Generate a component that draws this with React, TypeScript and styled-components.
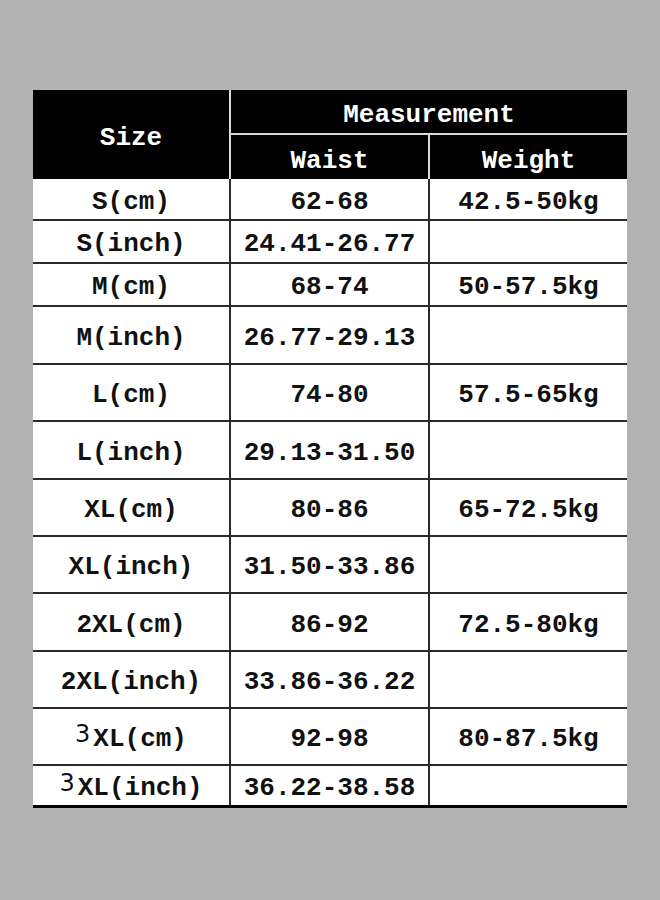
import React from 'react';
import styled, { createGlobalStyle } from 'styled-components';

const GlobalStyle = createGlobalStyle`
	html, body {
		margin: 0;
		padding: 0;
		background: #b2b2b2;
	}
`;

const Page = styled.div`
	width: 660px;
	height: 900px;
	padding: 90px 0 0 33px;
	box-sizing: border-box;
	background: #b2b2b2;
`;

const Grid = styled.div<{ $rows: string }>`
	display: grid;
	grid-template-columns: 198px 199px 197px;
	grid-template-rows: ${(p) => p.$rows};
	font-family: 'Liberation Mono', 'DejaVu Sans Mono', monospace;
	font-size: 26px;
	border-bottom: 3px solid #000;
	width: 594px;
`;

const HeadCell = styled.div<{ $span?: string; $right?: boolean; $bottom?: boolean }>`
	${(p) => p.$span || ''}
	display: flex;
	align-items: center;
	justify-content: center;
	background: #000;
	color: #fff;
	font-weight: bold;
	box-sizing: border-box;
	border-right: ${(p) => (p.$right ? '2px solid #d8d8d8' : 'none')};
	border-bottom: ${(p) => (p.$bottom ? '2px solid #d8d8d8' : 'none')};
	padding-top: 7px;
`;

const Cell = styled.div<{ $right?: boolean; $last?: boolean }>`
	display: flex;
	align-items: center;
	justify-content: center;
	background: #fff;
	color: #111;
	font-weight: bold;
	white-space: nowrap;
	box-sizing: border-box;
	border-right: ${(p) => (p.$right ? '2px solid #2a2a2a' : 'none')};
	border-bottom: ${(p) => (p.$last ? 'none' : '2px solid #2a2a2a')};
	padding-top: 5px;
`;

const Three = styled.span`
	font-family: 'DejaVu Sans', sans-serif;
	font-weight: normal;
	font-size: 24px;
	position: relative;
	top: -5px;
	margin-right: 3px;
`;

type Row = { size: string; waist: string; weight: string; h: number };

const rows: Row[] = [
	{ size: 'S(cm)', waist: '62-68', weight: '42.5-50kg', h: 42 },
	{ size: 'S(inch)', waist: '24.41-26.77', weight: '', h: 43 },
	{ size: 'M(cm)', waist: '68-74', weight: '50-57.5kg', h: 43 },
	{ size: 'M(inch)', waist: '26.77-29.13', weight: '', h: 58 },
	{ size: 'L(cm)', waist: '74-80', weight: '57.5-65kg', h: 57 },
	{ size: 'L(inch)', waist: '29.13-31.50', weight: '', h: 58 },
	{ size: 'XL(cm)', waist: '80-86', weight: '65-72.5kg', h: 57 },
	{ size: 'XL(inch)', waist: '31.50-33.86', weight: '', h: 57 },
	{ size: '2XL(cm)', waist: '86-92', weight: '72.5-80kg', h: 58 },
	{ size: '2XL(inch)', waist: '33.86-36.22', weight: '', h: 57 },
	{ size: '3XL(cm)', waist: '92-98', weight: '80-87.5kg', h: 57 },
	{ size: '3XL(inch)', waist: '36.22-38.58', weight: '', h: 39 },
];

const SizeLabel: React.FC<{ text: string }> = ({ text }) =>
	text.startsWith('3') ? (
		<>
			<Three>3</Three>
			{text.slice(1)}
		</>
	) : (
		<>{text}</>
	);

const App: React.FC = () => {
	const template = ['45px', '44px', ...rows.map((r) => `${r.h}px`)].join(' ');
	return (
		<>
			<GlobalStyle />
			<Page>
				<Grid $rows={template}>
					<HeadCell $span="grid-row: 1 / 3;" $right>
						Size
					</HeadCell>
					<HeadCell $span="grid-column: 2 / 4;" $bottom>
						Measurement
					</HeadCell>
					<HeadCell $right>Waist</HeadCell>
					<HeadCell>Weight</HeadCell>
					{rows.map((r, i) => {
						const last = i === rows.length - 1;
						return (
							<React.Fragment key={r.size}>
								<Cell $right $last={last}>
									<SizeLabel text={r.size} />
								</Cell>
								<Cell $right $last={last}>
									{r.waist}
								</Cell>
								<Cell $last={last}>{r.weight}</Cell>
							</React.Fragment>
						);
					})}
				</Grid>
			</Page>
		</>
	);
};

export default App;
